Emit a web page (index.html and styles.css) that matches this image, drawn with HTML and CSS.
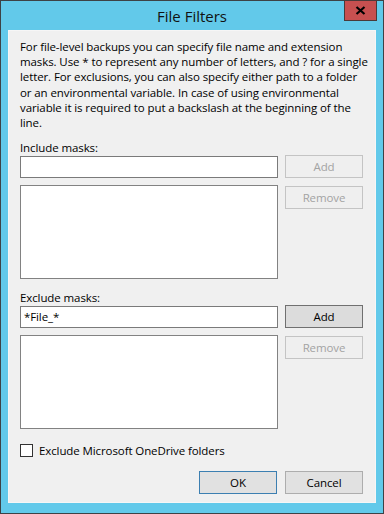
FILE: index.html
```html
<!DOCTYPE html>
<html>
<head>
<meta charset="utf-8">
<link rel="stylesheet" href="styles.css">
</head>
<body>
<div class="window">
  <div class="titlebar">
    <div></div>
    <div class="title">File Filters</div>
    <div class="close"><svg width="11" height="9" viewBox="0 0 11 9"><path d="M1.5 1 L9.5 8 M9.5 1 L1.5 8" stroke="#000" stroke-width="2.2" fill="none"/></svg></div>
  </div>
  <div class="client">
    <p class="desc">For file-level backups you can specify file name and extension<br>masks. Use * to represent any number of letters, and ? for a single<br>letter. For exclusions, you can also specify either path to a folder<br>or an environmental variable. In case of using environmental<br>variable it is required to put a backslash at the beginning of the<br>line.</p>
    <div class="label l1">Include masks:</div>
    <div class="row">
      <div class="input"></div>
      <div class="btn disabled">Add</div>
    </div>
    <div class="row row-list">
      <div class="list"></div>
      <div class="btn disabled">Remove</div>
    </div>
    <div class="label l2">Exclude masks:</div>
    <div class="row">
      <div class="input">*File_*</div>
      <div class="btn active">Add</div>
    </div>
    <div class="row row-list">
      <div class="list"></div>
      <div class="btn disabled">Remove</div>
    </div>
    <div class="check">
      <span class="box"></span>
      <span>Exclude Microsoft OneDrive folders</span>
    </div>
    <div class="actions">
      <div class="btn default">OK</div>
      <div class="btn">Cancel</div>
    </div>
  </div>
</div>
</body>
</html>
```

FILE: styles.css
```css
* { box-sizing: border-box; }
html, body { margin: 0; padding: 0; }
body { width: 384px; height: 514px; overflow: hidden; font-family: "Open Sans", "Noto Sans", sans-serif; }
.window {
  width: 384px; height: 514px;
  background: #62c9ea;
  border: 1px solid #3d4246;
  display: flex; flex-direction: column;
}
.titlebar {
  height: 30px;
  margin-top: -1px;
  display: grid;
  grid-template-columns: 1fr auto 1fr;
  align-items: start;
}
.title {
  font-size: 15px;
  line-height: 30px;
  color: #111;
  padding-top: 1px;
}
.close {
  justify-self: end;
  margin-right: 6px;
  width: 33px; height: 21px;
  background: #c75050;
  border: 1px solid #4a3a3a;
  display: flex; align-items: center; justify-content: center;
}
.client {
  margin: 0 7px;
  height: 473px;
  background: #f0f0f0;
  border: 1px solid #f6f6f6;
  padding: 8px 12px 0 11px;
  font-size: 11.5px;
  letter-spacing: -0.1px;
  white-space: nowrap;
  color: #000;
  display: flex; flex-direction: column;
  flex: none;
}
.desc { margin: 0; line-height: 15.2px; }
.label { line-height: 15px; }
.l1 { margin-top: 10px; }
.l2 { margin-top: 11px; }
.row { display: flex; justify-content: space-between; align-items: flex-start; }
.input {
  width: 258px; height: 22px; margin-top: 1px;
  background: #fff; border: 1px solid #7a7a7a;
  padding: 0 3px; line-height: 20px;
}
.list {
  width: 258px; height: 94px;
  background: #fff; border: 1px solid #828282;
}
.row-list { margin-top: 7px; }
.row-list .btn { margin-top: 1px; }
.btn {
  width: 78px; height: 23px;
  background: #e1e1e1; border: 1px solid #adadad;
  text-align: center; line-height: 21px;
  font-size: 11.5px;
}
.btn.disabled { background: #efefef; border-color: #c4c4c4; color: #a3a3a3; }
.btn.active { background: #dcdcdc; border-color: #707070; }
.btn.default { border-color: #3c7fb1; }
.check {
  margin-top: 14px;
  display: flex; align-items: center; gap: 6px;
  line-height: 15px;
}
.box { width: 13px; height: 13px; background: #fff; border: 1px solid #333; }
.actions {
  margin-top: 13px;
  display: flex; justify-content: flex-end; gap: 8px;
}
```
